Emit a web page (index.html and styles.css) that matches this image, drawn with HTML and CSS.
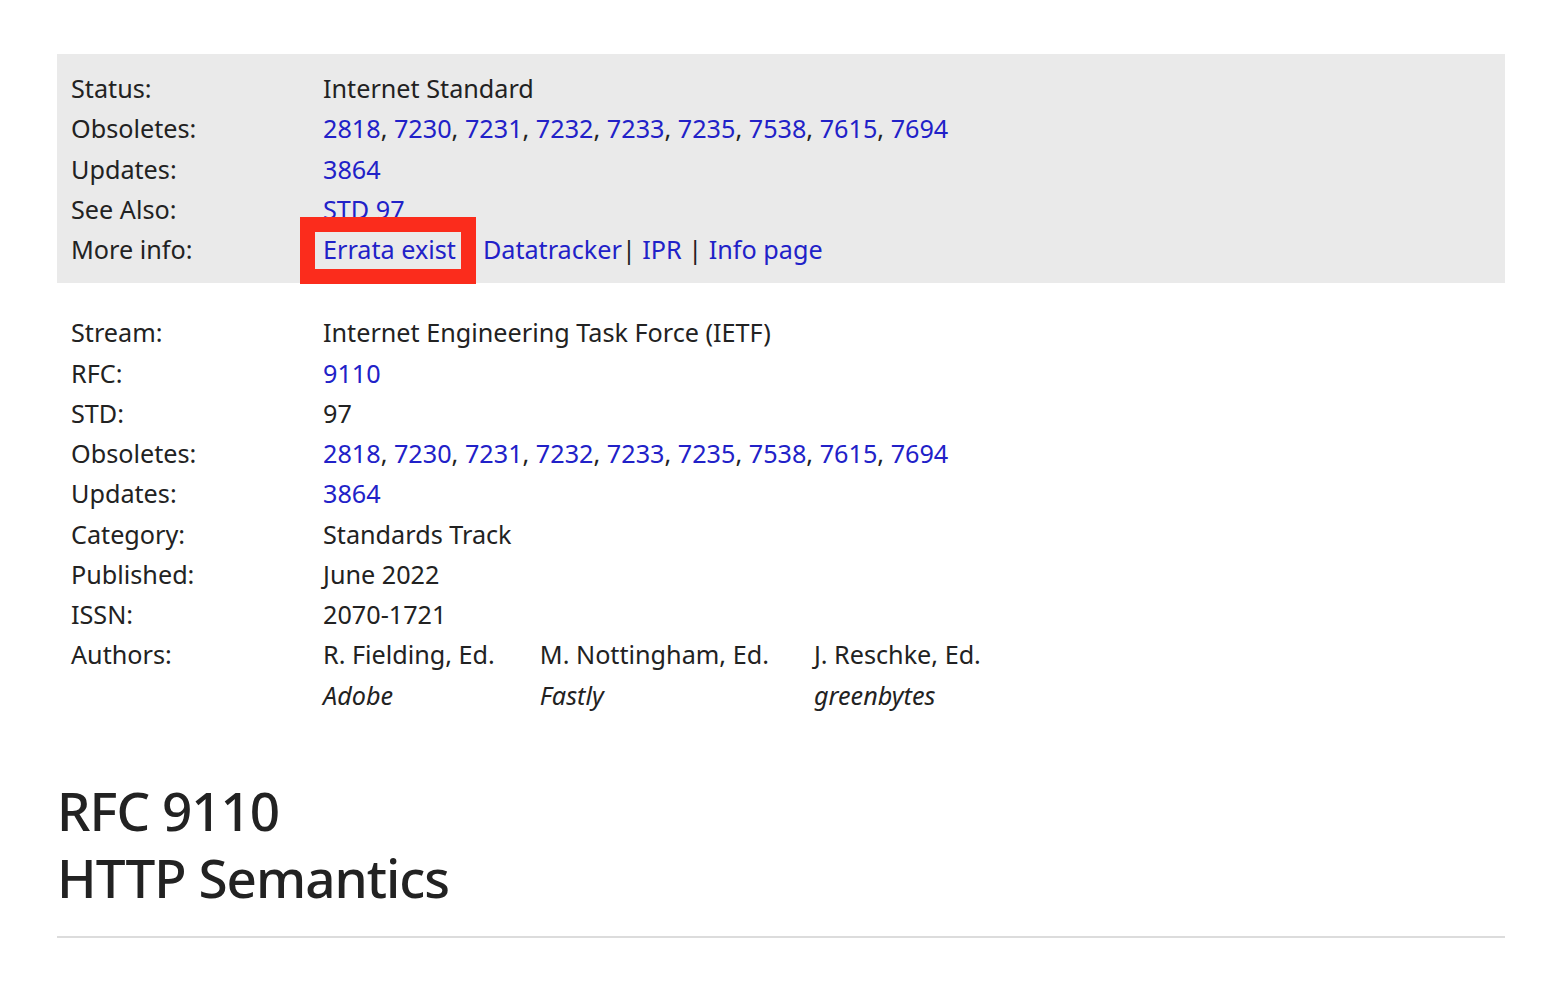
FILE: index.html
```html
<!DOCTYPE html>
<html lang="en">
<head>
<meta charset="utf-8">
<title>RFC 9110: HTTP Semantics</title>
<link rel="stylesheet" href="styles.css">
</head>
<body>
<main class="page">
  <dl class="meta meta-box">
    <dt>Status:</dt>
    <dd>Internet Standard</dd>
    <dt>Obsoletes:</dt>
    <dd><a href="#">2818</a>, <a href="#">7230</a>, <a href="#">7231</a>, <a href="#">7232</a>, <a href="#">7233</a>, <a href="#">7235</a>, <a href="#">7538</a>, <a href="#">7615</a>, <a href="#">7694</a></dd>
    <dt>Updates:</dt>
    <dd><a href="#">3864</a></dd>
    <dt>See Also:</dt>
    <dd><a href="#">STD 97</a></dd>
    <dt>More info:</dt>
    <dd><a href="#" class="errata">Errata exist</a> | <a href="#">Datatracker</a>| <a href="#">IPR</a> | <a href="#">Info page</a></dd>
  </dl>

  <dl class="meta meta-plain">
    <dt>Stream:</dt>
    <dd>Internet Engineering Task Force (IETF)</dd>
    <dt>RFC:</dt>
    <dd><a href="#">9110</a></dd>
    <dt>STD:</dt>
    <dd>97</dd>
    <dt>Obsoletes:</dt>
    <dd><a href="#">2818</a>, <a href="#">7230</a>, <a href="#">7231</a>, <a href="#">7232</a>, <a href="#">7233</a>, <a href="#">7235</a>, <a href="#">7538</a>, <a href="#">7615</a>, <a href="#">7694</a></dd>
    <dt>Updates:</dt>
    <dd><a href="#">3864</a></dd>
    <dt>Category:</dt>
    <dd>Standards Track</dd>
    <dt>Published:</dt>
    <dd>June 2022</dd>
    <dt>ISSN:</dt>
    <dd>2070-1721</dd>
    <dt>Authors:</dt>
    <dd class="authors">
      <div class="author"><div>R. Fielding, Ed.</div><div class="org">Adobe</div></div>
      <div class="author"><div>M. Nottingham, Ed.</div><div class="org">Fastly</div></div>
      <div class="author"><div>J. Reschke, Ed.</div><div class="org">greenbytes</div></div>
    </dd>
  </dl>

  <h1 class="title"><span class="title-line">RFC 9110</span><span class="title-line">HTTP Semantics</span></h1>
  <hr class="rule">
</main>
</body>
</html>
```

FILE: styles.css
```css
html, body {
  margin: 0;
  padding: 0;
  background: #ffffff;
}

body {
  font-family: "Noto Sans", "Open Sans", sans-serif;
  font-size: 25.2px;
  line-height: 40.25px;
  color: #222222;
}

.page {
  margin: 0 47px 0 57px;
  padding-top: 54px;
}

a {
  color: #2121c8;
  text-decoration: none;
}

.meta {
  display: grid;
  grid-template-columns: 252px 1fr;
  margin: 0;
}

.meta dt,
.meta dd {
  margin: 0;
}

.meta-box {
  background: #eaeaea;
  padding: 14px 14px 14px;
}

.meta-plain {
  margin-top: 29px;
  padding: 0 14px;
}

.errata {
  position: relative;
  display: inline-block;
}

.errata::after {
  content: "";
  position: absolute;
  left: -23px;
  right: -20px;
  top: -12px;
  bottom: -15px;
  border: 15px solid #fb2c1c;
  pointer-events: none;
}

.authors {
  display: flex;
}

.author {
  margin-right: 45px;
}

.org {
  font-style: italic;
}

.title {
  margin: 62px 0 0 0;
  font-size: 53px;
  line-height: 67px;
  font-weight: 500;
  letter-spacing: -1px;
  color: #222222;
}

.title-line {
  display: block;
}

.rule {
  margin: 25px 0 0;
  border: 0;
  height: 2px;
  background: #dcdcdc;
}
```
